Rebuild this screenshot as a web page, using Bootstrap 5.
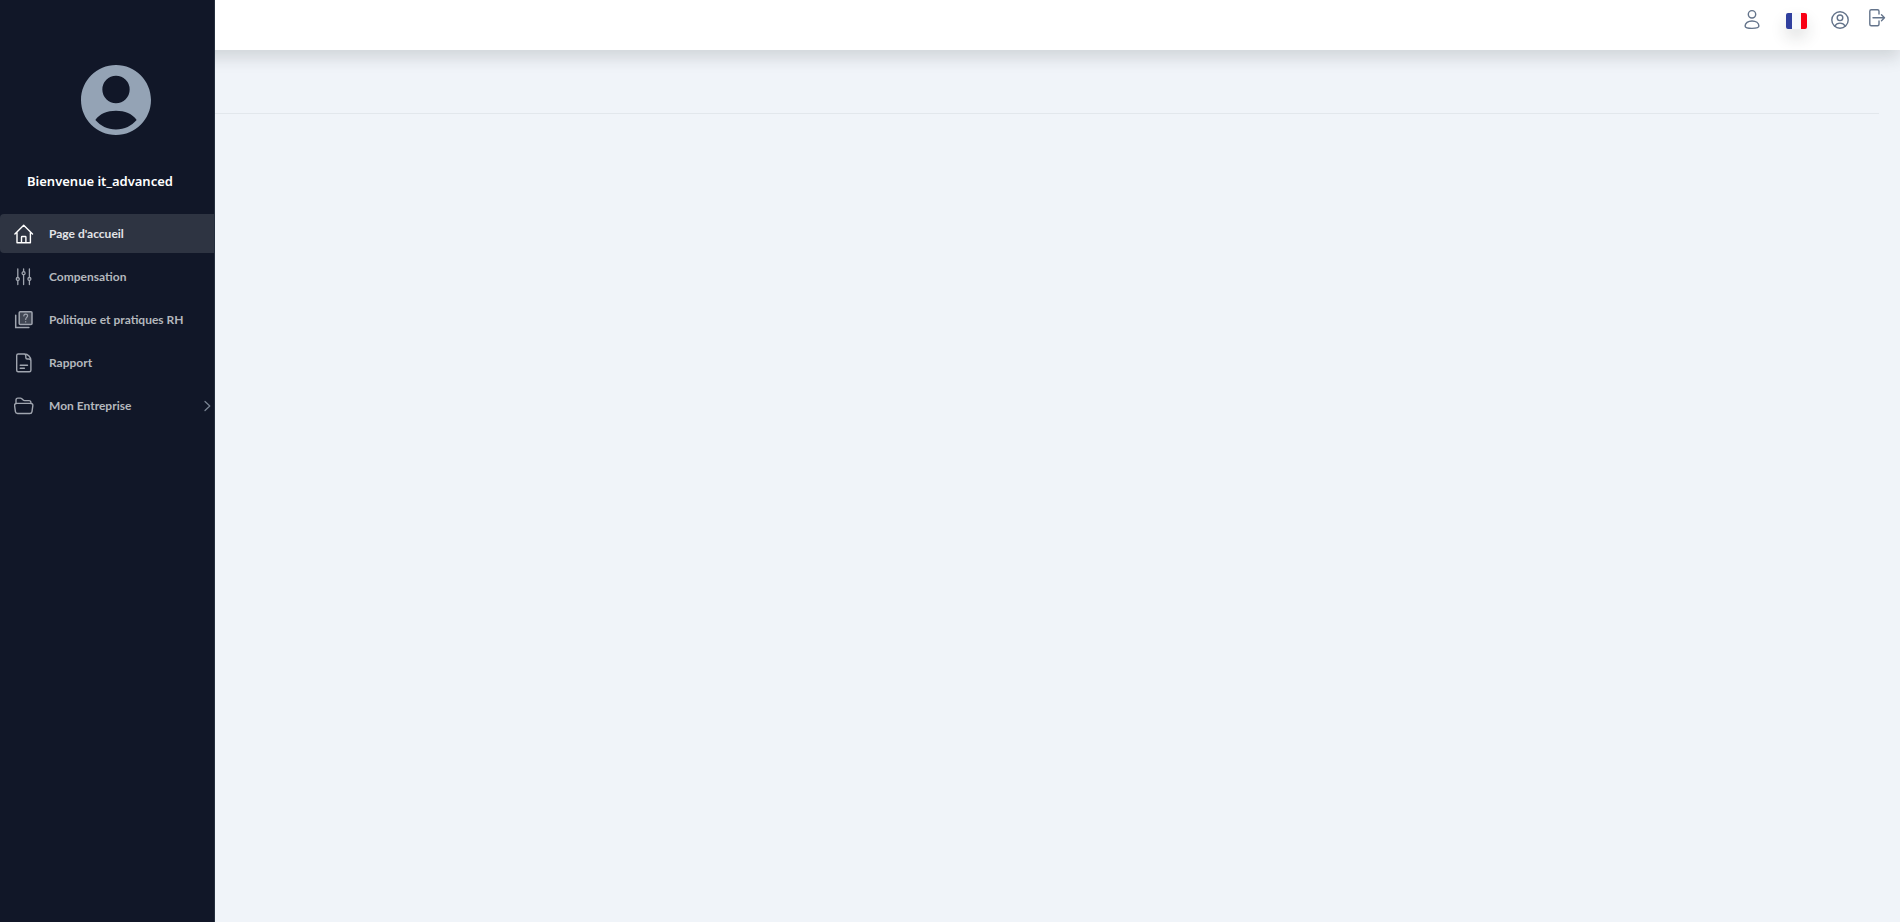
<!DOCTYPE html>
<html lang="fr">
<head>
<meta charset="utf-8">
<meta name="viewport" content="width=device-width, initial-scale=1">
<title>Page d'accueil</title>
<link href="https://cdn.jsdelivr.net/npm/bootstrap@5.3.0/dist/css/bootstrap.min.css" rel="stylesheet">
<style>
  body { font-family: "Noto Sans", "Open Sans", sans-serif; background: #f0f4f9; }
  .app-side { width: 215px; background: #111728; border-right: 1px solid #252f3e; padding-top: 58px; z-index: 2; }
  .app-avatar { margin-left: 74px; color: #94a3b5; }
  .app-welcome { margin: 28px 0 22px 27px; font-size: 13px; line-height: 22px; font-weight: 600; color: #fff; }
  .app-menu { gap: 4px; }
  .app-menu .nav-link { height: 39px; padding: 1px 2px 0 14px; gap: 15px; font-family: Lato, "Noto Sans", sans-serif; font-size: 12px; font-weight: 700; color: #b4b7bd; border-radius: 4px 0 0 4px; }
  .app-menu .nav-link.active { background: #2e3442; color: #e3e4e8; }
  .app-menu .nav-link.active svg { color: #fff; }
  .app-menu svg { color: #a0a5af; }
  .app-menu .app-chevron { color: #7b8594; }
  .app-top { height: 50px; background: #fff; padding: 8px 13px 0 0; margin-left: -30px; }
  .app-top .btn { padding: 0; border: 0; line-height: 1; color: #64748b; }
  .app-tools { gap: 18px; }
  .app-group { gap: 24px; }
  .app-top .app-lang { padding-top: 5px; }
  .app-flag { border-radius: 2px; }
  .app-rule { margin: 63px 21px 0 0; border-color: #d9dde2; opacity: .6; }
  .line-icon { display: block; fill: none; stroke: currentColor; stroke-linecap: round; stroke-linejoin: round; }
</style>
</head>
<body>
<div class="d-flex min-vh-100">
  <aside class="app-side flex-shrink-0 position-relative">
    <svg class="app-avatar d-block" width="84" height="84" viewBox="0 0 24 24" fill="currentColor" aria-hidden="true"><path d="M12 2C6.480 2 2 6.480 2 12s4.480 10 10 10 10-4.480 10-10S17.520 2 12 2zm0 3.100a3.900 3.900 0 1 1 0 7.800 3.900 3.900 0 0 1 0-7.800zm0 15.300c-2.500 0-4.400-1-5.900-2.700C7.300 16 9.500 15.100 12 15.100s4.700.9 5.900 2.600c-1.500 1.700-3.400 2.700-5.900 2.700z"/></svg>
    <div class="app-welcome">Bienvenue it_advanced</div>
    <nav class="app-menu nav flex-column" aria-label="Menu principal">
      <a class="nav-link active d-flex align-items-center" href="#" aria-current="page">
        <svg class="line-icon" width="20" height="20" viewBox="0 0 20 20" stroke-width="1.400" aria-hidden="true"><path d="M.9 10 9.700 1.300 18.500 10M3 8.500v10.300h13.400V8.500M7.500 18.500v-5.300q0-.7.7-.7h3q.7 0 .7.7v5.300"/></svg>
        <span>Page d'accueil</span>
      </a>
      <a class="nav-link d-flex align-items-center" href="#">
        <svg class="line-icon" width="20" height="20" viewBox="0 0 20 20" stroke-width="1.300" aria-hidden="true"><path d="M3.800 2v8.500M3.800 13.500v4M9.600 2v2.700M9.600 7.700v9.800M15.400 2v8.500M15.400 13.500v4"/><circle cx="3.800" cy="12" r="1.500"/><circle cx="9.600" cy="6.200" r="1.500"/><circle cx="15.400" cy="12" r="1.500"/></svg>
        <span>Compensation</span>
      </a>
      <a class="nav-link d-flex align-items-center" href="#">
        <svg class="line-icon" width="20" height="20" viewBox="0 0 20 20" stroke-width="1.500" aria-hidden="true"><rect x="5.200" y="1.700" width="12.800" height="12.800" rx="1" fill="#414754"/><path d="M1.700 5.200v12.300h13.200" stroke-linejoin="miter"/><path d="M9.800 5.900q.1-1.800 1.900-1.800 1.900 0 1.900 1.700c0 1.600-1.900 1.600-1.900 3.700M11.700 11.700v.3" stroke-width="1.200"/></svg>
        <span>Politique et pratiques RH</span>
      </a>
      <a class="nav-link d-flex align-items-center" href="#">
        <svg class="line-icon" width="20" height="20" viewBox="0 0 20 20" stroke-width="1.400" aria-hidden="true"><path d="M10.500 1H4.200Q2.700 1 2.700 2.500v14.800q0 1.500 1.500 1.500h11.200q1.500 0 1.500-1.500V7.500C16.900 4 14 1 10.500 1zM10.500 1q1.300.4 1.300 2v1.500q0 1.500 1.500 1.500h1.300q1.800 0 2.300 1.500M6.200 12.300h7.300M6.200 15.200h4.200"/></svg>
        <span>Rapport</span>
      </a>
      <a class="nav-link d-flex align-items-center" href="#" aria-expanded="false">
        <svg class="line-icon" width="20" height="20" viewBox="0 0 20 20" stroke-width="1.400" aria-hidden="true"><path d="M2 7.500V4q0-1.900 1.900-1.900h2.500q.8 0 1.400.6l1.400 1.400q.5.500 1.300.5H15q1.900 0 1.900 1.900v1"/><path d="M2.700 7.400h14q2.400 0 2.100 2.400l-.8 5.800q-.3 1.900-2.200 1.900H3.600q-1.900 0-2.200-1.900L.6 9.800Q.4 7.400 2.700 7.400z"/></svg>
        <span class="flex-grow-1">Mon Entreprise</span>
        <svg class="line-icon app-chevron" width="10" height="12" viewBox="0 0 10 12" stroke-width="1.200" aria-hidden="true"><path d="m3 1.500 4.800 4.500L3 10.500"/></svg>
      </a>
    </nav>
  </aside>
  <div class="flex-grow-1">
    <header class="app-top shadow">
      <div class="app-tools d-flex justify-content-end align-items-start">
        <div class="app-group d-flex align-items-start">
          <button class="btn" type="button" aria-label="Utilisateur"><svg class="line-icon" width="20" height="22" viewBox="0 0 20 22" stroke-width="1.400" aria-hidden="true"><circle cx="10" cy="6.300" r="3.700"/><path d="M3.100 18.100c0-3.100 3-5.100 6.900-5.100s6.900 2 6.900 5.100c0 1.500-2.400 2.300-6.900 2.300s-6.900-.8-6.900-2.300z"/></svg></button>
          <button class="btn app-lang" type="button" aria-label="Français"><svg class="app-flag d-block shadow" width="21" height="16" viewBox="0 0 21 16" aria-hidden="true"><path fill="#f5f8fb" d="M0 0h21v16H0z"/><path fill="#2f3f9e" d="M0 0h6v16H0z"/><path fill="#f90014" d="M15 0h6v16h-6z"/></svg></button>
          <button class="btn" type="button" aria-label="Profil"><svg class="line-icon" width="18" height="22" viewBox="0 0 18 22" stroke-width="1.400" aria-hidden="true"><circle cx="9" cy="12" r="8.200"/><circle cx="9" cy="9.800" r="2.800"/><path d="M3.700 18.100q1.800-3 5.300-3t5.300 3"/></svg></button>
        </div>
        <button class="btn" type="button" aria-label="Déconnexion"><svg class="line-icon" width="20" height="20" viewBox="0 0 20 20" stroke-width="1.400" aria-hidden="true"><path d="M12 6V3.200q0-1.500-1.500-1.500H4.300q-1.500 0-1.500 1.500v13q0 1.500 1.500 1.500h6.200q1.500 0 1.500-1.500v-3.300M6 9.700h11.500M14.500 6.700l3 3-3 3"/></svg></button>
      </div>
    </header>
    <main>
      <hr class="app-rule">
    </main>
  </div>
</div>
<script src="https://cdn.jsdelivr.net/npm/bootstrap@5.3.0/dist/js/bootstrap.bundle.min.js"></script>
</body>
</html>
